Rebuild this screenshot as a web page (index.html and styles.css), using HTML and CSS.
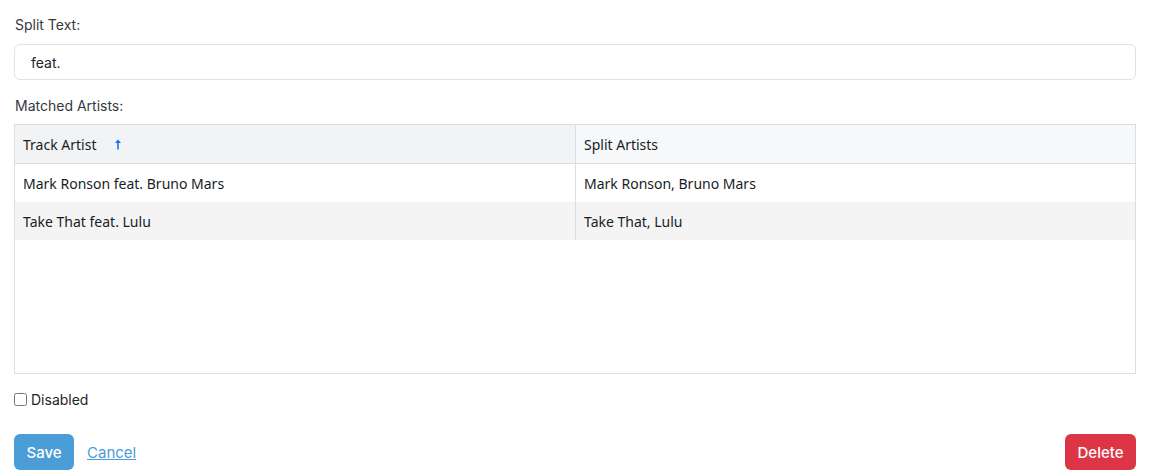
FILE: index.html
```html
<!DOCTYPE html>
<html>
<head>
<meta charset="utf-8">
<link rel="stylesheet" href="styles.css">
</head>
<body>
<div class="form">
  <label class="label">Split Text:</label>
  <input class="input" type="text" value="feat.">
  <label class="label label-matched">Matched Artists:</label>
  <div class="grid">
    <div class="row header">
      <div class="cell col1 head1">Track Artist
        <svg class="sort" width="6" height="11" viewBox="0 0 6 11"><path d="M3 0.5 L6 4 H3.8 V10.5 H2.2 V4 H0 Z" fill="#1a73e8"/></svg>
      </div>
      <div class="cell col2 head2">Split Artists</div>
    </div>
    <div class="row">
      <div class="cell col1">Mark Ronson feat. Bruno Mars</div>
      <div class="cell col2">Mark Ronson, Bruno Mars</div>
    </div>
    <div class="row alt">
      <div class="cell col1">Take That feat. Lulu</div>
      <div class="cell col2">Take That, Lulu</div>
    </div>
  </div>
  <label class="check"><input type="checkbox" class="cb"> Disabled</label>
  <div class="actions">
    <div class="left">
      <button class="btn save">Save</button>
      <a class="cancel" href="#">Cancel</a>
    </div>
    <button class="btn delete">Delete</button>
  </div>
</div>
</body>
</html>
```
FILE: styles.css
```css
html, body {
  margin: 0;
  padding: 0;
  background: #fff;
}
body {
  font-family: Inter, "Liberation Sans", sans-serif;
  color: #212529;
  font-size: 14px;
}
.form {
  display: flex;
  flex-direction: column;
  padding: 15px 14px 0 14px;
}
.label {
  display: block;
  font-size: 14px;
  line-height: 20px;
  color: #343a40;
  margin-left: 1px;
}
.input {
  margin-top: 9px;
  height: 36px;
  box-sizing: border-box;
  border: 1px solid #dee2e6;
  border-radius: 6px;
  padding: 0 16px;
  font-family: Inter, "Liberation Sans", sans-serif;
  font-size: 14px;
  color: #212529;
  outline: none;
}
.label-matched {
  margin-top: 16px;
}
.grid {
  margin-top: 8px;
  height: 250px;
  box-sizing: border-box;
  border: 1px solid #dddddd;
  font-family: "Segoe UI", "Noto Sans", "Open Sans", sans-serif;
  font-size: 14px;
  color: #181d1f;
}
.row {
  display: flex;
  height: 38px;
}
.row.header {
  height: 38px;
  border-bottom: 1px solid #dddddd;
}
.row.alt {
  background: #f4f4f4;
}
.cell {
  display: flex;
  align-items: center;
  padding: 0 8px;
  box-sizing: border-box;
}
.col1 {
  width: 561px;
  border-right: 1px solid #dddddd;
}
.col2 {
  flex: 1;
}
.head1 {
  background: #f2f3f5;
}
.head2 {
  background: #f7f8fa;
}
.sort {
  margin-left: 19px;
}
.check {
  margin-top: 17px;
  display: flex;
  align-items: center;
  font-size: 14px;
  color: #212529;
}
.cb {
  margin: 0 4px 0 0;
  width: 13px;
  height: 13px;
}
.actions {
  margin-top: 26px;
  display: flex;
  justify-content: space-between;
  align-items: center;
}
.left {
  display: flex;
  align-items: center;
  gap: 13px;
}
.btn {
  height: 36px;
  border: none;
  border-radius: 6px;
  color: #fff;
  font-family: Inter, "Liberation Sans", sans-serif;
  font-size: 15px;
  font-weight: 500;
  padding: 0 12px;
}
.save {
  background: #4a9dd7;
  width: 60px;
}
.delete {
  background: #dc3545;
  width: 71px;
}
.cancel {
  color: #4a9dd7;
  text-decoration: underline;
  font-size: 15px;
}
```
